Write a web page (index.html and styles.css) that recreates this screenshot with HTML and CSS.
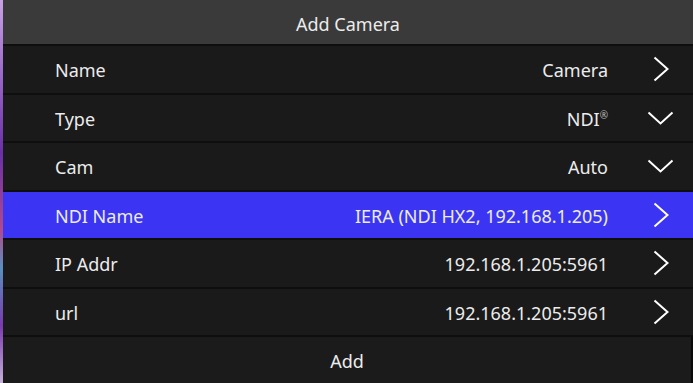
FILE: index.html
```html
<!DOCTYPE html>
<html lang="en">
<head>
  <meta charset="UTF-8" />
  <title>Add Camera</title>
  <link rel="stylesheet" href="styles.css">
</head>
<body>
  <div class="panel">
    <header>Add Camera</header>
    <ul class="rows">
      <li class="row">
        <span class="label">Name</span>
        <span class="value">Camera</span>
        <svg class="icon" viewBox="0 0 16 26"><polyline points="1.5,1.5 14.5,13 1.5,24.5" /></svg>
      </li>
      <li class="row">
        <span class="label">Type</span>
        <span class="value">NDI<sup>®</sup></span>
        <svg class="icon down" viewBox="0 0 27 14"><polyline points="1.5,1.5 13.5,12.5 25.5,1.5" /></svg>
      </li>
      <li class="row">
        <span class="label">Cam</span>
        <span class="value">Auto</span>
        <svg class="icon down" viewBox="0 0 27 14"><polyline points="1.5,1.5 13.5,12.5 25.5,1.5" /></svg>
      </li>
      <li class="row active">
        <span class="label">NDI Name</span>
        <span class="value">IERA (NDI HX2, 192.168.1.205)</span>
        <svg class="icon" viewBox="0 0 16 26"><polyline points="1.5,1.5 14.5,13 1.5,24.5" /></svg>
      </li>
      <li class="row">
        <span class="label">IP Addr</span>
        <span class="value">192.168.1.205:5961</span>
        <svg class="icon" viewBox="0 0 16 26"><polyline points="1.5,1.5 14.5,13 1.5,24.5" /></svg>
      </li>
      <li class="row">
        <span class="label">url</span>
        <span class="value">192.168.1.205:5961</span>
        <svg class="icon" viewBox="0 0 16 26"><polyline points="1.5,1.5 14.5,13 1.5,24.5" /></svg>
      </li>
    </ul>
    <button class="add">Add</button>
  </div>
</body>
</html>
```

FILE: styles.css
```css
html, body { margin: 0; height: 100%; }
body {
  background: linear-gradient(180deg, #c9a0e6, #6a2fa8 40%, #b04a8a 60%, #5a8fc0 70%, #7a3ab0 85%, #c6b0d8);
  font-family: "Noto Sans", "Open Sans", sans-serif;
  color: #ececec;
  overflow: hidden;
}
.panel {
  margin-left: 3px;
  height: 100%;
  background: #0e0e0e;
  display: flex;
  flex-direction: column;
  gap: 2px;
}
header {
  height: 44px;
  box-sizing: border-box;
  padding-top: 3px;
  background: #3a3a3a;
  display: flex;
  align-items: center;
  justify-content: center;
  font-size: 18px;
}
.rows {
  list-style: none;
  margin: 0;
  padding: 0;
  display: flex;
  flex-direction: column;
  gap: 2px;
}
.row {
  height: 46.5px;
  background: #1a1a1a;
  display: flex;
  align-items: center;
  padding-left: 52px;
  font-size: 18px;
}
.label, .value { padding-top: 2px; }
.row.active { background: #3b35f3; }
.label { flex-shrink: 0; }
.value {
  margin-left: auto;
  white-space: nowrap;
}
.value sup { font-size: 10px; color: #bbb; vertical-align: 7px; }
.icon {
  width: 16px;
  height: 26px;
  margin: 0 24px 0 45px;
  fill: none;
  stroke: #fff;
  stroke-width: 2;
}
.icon.down {
  width: 27px;
  height: 14px;
  margin: 0 19px 0 39px;
}
.add {
  flex: 1;
  border: none;
  border-right: 2px solid #0a0a0a;
  background: #1b1b1b;
  color: #ececec;
  font-family: inherit;
  font-size: 18px;
  padding: 2px 0 0;
}
```
